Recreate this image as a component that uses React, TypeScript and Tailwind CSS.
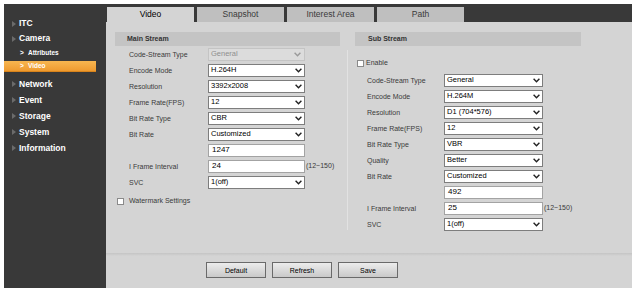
import React from "react";

const Chevron = ({ color = "#222" }: { color?: string }) => (
  <svg width="7" height="5" viewBox="0 0 7 5" className="shrink-0">
    <path d="M0.6 0.8 L3.5 3.8 L6.4 0.8" stroke={color} strokeWidth="1.4" fill="none" />
  </svg>
);

const Tri = () => (
  <svg width="4" height="6" viewBox="0 0 4 6" className="shrink-0">
    <polygon points="0,0 4,3 0,6" fill="#6b6b6b" />
  </svg>
);

const Select = ({ value, w, disabled }: { value: string; w: string; disabled?: boolean }) => (
  <div
    className={
      disabled
        ? `${w} h-[13px] flex items-center justify-between pl-[2px] pr-[3px] bg-[#dcdcdc] border border-[#c4c4c4] text-[7.5px] text-[#8f8f8f]`
        : `${w} h-[13px] flex items-center justify-between pl-[2px] pr-[2px] bg-white border border-[#7d7d7d] text-[7.5px] text-black`
    }
  >
    <span className="leading-none">{value}</span>
    <Chevron color={disabled ? "#9a9a9a" : "#222"} />
  </div>
);

const Input = ({ value, w }: { value: string; w: string }) => (
  <div className={`${w} h-[13px] flex items-center pl-[3px] bg-white border border-[#a3a3a3] text-[8px] text-black leading-none`}>
    {value}
  </div>
);

const Row = ({ label, lw, children }: { label: string; lw: string; children?: React.ReactNode }) => (
  <div className="h-[16px] flex items-center">
    <div className={`${lw} text-[7px] text-[#3a3a3a] leading-none`}>{label}</div>
    {children}
  </div>
);

const Checkbox = () => <div className="w-[7px] h-[7px] bg-white border border-[#8a8a8a] shrink-0" />;

const Btn = ({ label }: { label: string }) => (
  <div className="w-[60px] h-[16px] flex items-center justify-center border border-[#6a6a6a] bg-gradient-to-b from-[#ececec] to-[#c9c9c9] text-[7px] text-black leading-none">
    {label}
  </div>
);

export default function App() {
  const mw = "w-[97px]";
  const sw = "w-[99px]";
  return (
    <div className="w-[632px] h-[297px] bg-white pt-[4px] pl-[4px] font-['Liberation_Sans',Arial,sans-serif]">
      <div className="flex h-[284px]">
        {/* Sidebar */}
        <aside className="w-[102px] bg-[#393939] pt-[12px] text-white font-bold">
          <div className="h-[15px] flex items-center pl-[8px] gap-[3px] text-[8.5px]">
            <Tri />
            <span>ITC</span>
          </div>
          <div className="h-[15px] flex items-center pl-[8px] gap-[3px] text-[8.5px]">
            <Tri />
            <span>Camera</span>
          </div>
          <div className="h-[14px] flex items-center pl-[16px] text-[6.5px]">
            <span className="w-[8px]">&gt;</span>
            <span>Attributes</span>
          </div>
          <div className="mt-[1px] w-[92px] h-[11px] flex items-center pl-[16px] text-[6.5px] bg-gradient-to-b from-[#f7b650] to-[#ee9a2e] border-b border-[#d9841c]">
            <span className="w-[8px]">&gt;</span>
            <span>Video</span>
          </div>
          <div className="mt-[4px]">
            {["Network", "Event", "Storage", "System", "Information"].map((t) => (
              <div key={t} className="h-[16px] flex items-center pl-[8px] gap-[3px] text-[8.5px]">
                <Tri />
                <span>{t}</span>
              </div>
            ))}
          </div>
        </aside>

        {/* Main */}
        <main className="flex-1 flex flex-col bg-[#d4d4d4]">
          <div className="h-[18px] bg-[#393939] flex items-end pl-[1px] gap-[3px]">
            <div className="w-[87px] h-[15px] bg-[#d4d4d4] flex items-center justify-center text-[8.5px] text-black">Video</div>
            <div className="w-[87px] h-[15px] bg-[#bfbfbf] flex items-center justify-center text-[8.5px] text-[#3a3a3a]">Snapshot</div>
            <div className="w-[87px] h-[15px] bg-[#bfbfbf] flex items-center justify-center text-[8.5px] text-[#3a3a3a]">Interest Area</div>
            <div className="w-[87px] h-[15px] bg-[#bfbfbf] flex items-center justify-center text-[8.5px] text-[#3a3a3a]">Path</div>
          </div>

          <div className="flex-1 flex pl-[9px] pt-[10px]">
            {/* Main stream */}
            <section className="w-[225px]">
              <div className="h-[14px] bg-[#c4c4c4] flex items-center pl-[12px] text-[7px] font-bold text-[#333]">Main Stream</div>
              <div className="pl-[14px]">
                <Row label="Code-Stream Type" lw="w-[79px]"><Select value="General" w={mw} disabled /></Row>
                <Row label="Encode Mode" lw="w-[79px]"><Select value="H.264H" w={mw} /></Row>
                <Row label="Resolution" lw="w-[79px]"><Select value="3392x2008" w={mw} /></Row>
                <Row label="Frame Rate(FPS)" lw="w-[79px]"><Select value="12" w={mw} /></Row>
                <Row label="Bit Rate Type" lw="w-[79px]"><Select value="CBR" w={mw} /></Row>
                <Row label="Bit Rate" lw="w-[79px]"><Select value="Customized" w={mw} /></Row>
                <Row label="" lw="w-[79px]"><Input value="1247" w={mw} /></Row>
                <Row label="I Frame Interval" lw="w-[79px]">
                  <Input value="24" w={mw} />
                  <span className="ml-[1px] text-[7px] text-[#3a3a3a]">(12~150)</span>
                </Row>
                <Row label="SVC" lw="w-[79px]"><Select value="1(off)" w={mw} /></Row>
              </div>
              <div className="mt-[3px] h-[16px] flex items-center pl-[2px] gap-[5px]">
                <Checkbox />
                <span className="text-[7px] text-[#3a3a3a]">Watermark Settings</span>
              </div>
            </section>

            <div className="ml-[7px] mt-[18px] w-px h-[180px] bg-[#e2e2e2]" />

            {/* Sub stream */}
            <section className="ml-[7px] w-[226px]">
              <div className="h-[14px] bg-[#c4c4c4] flex items-center pl-[13px] text-[7px] font-bold text-[#333]">Sub Stream</div>
              <div className="mt-[9px] h-[17px] flex items-center pl-[2px] gap-[2px]">
                <Checkbox />
                <span className="text-[7px] text-[#3a3a3a]">Enable</span>
              </div>
              <div className="pl-[12px]">
                <Row label="Code-Stream Type" lw="w-[77px]"><Select value="General" w={sw} /></Row>
                <Row label="Encode Mode" lw="w-[77px]"><Select value="H.264M" w={sw} /></Row>
                <Row label="Resolution" lw="w-[77px]"><Select value="D1 (704*576)" w={sw} /></Row>
                <Row label="Frame Rate(FPS)" lw="w-[77px]"><Select value="12" w={sw} /></Row>
                <Row label="Bit Rate Type" lw="w-[77px]"><Select value="VBR" w={sw} /></Row>
                <Row label="Quality" lw="w-[77px]"><Select value="Better" w={sw} /></Row>
                <Row label="Bit Rate" lw="w-[77px]"><Select value="Customized" w={sw} /></Row>
                <Row label="" lw="w-[77px]"><Input value="492" w={sw} /></Row>
                <Row label="I Frame Interval" lw="w-[77px]">
                  <Input value="25" w={sw} />
                  <span className="ml-[1px] text-[7px] text-[#3a3a3a]">(12~150)</span>
                </Row>
                <Row label="SVC" lw="w-[77px]"><Select value="1(off)" w={sw} /></Row>
              </div>
            </section>
          </div>

          {/* Button bar */}
          <div className="h-[35px]">
            <div className="h-[3px] bg-gradient-to-b from-[#c4c4c4] to-[#d4d4d4]" />
            <div className="pt-[6px] pl-[100px] flex gap-[6px]">
              <Btn label="Default" />
              <Btn label="Refresh" />
              <Btn label="Save" />
            </div>
          </div>
        </main>
      </div>
    </div>
  );
}
